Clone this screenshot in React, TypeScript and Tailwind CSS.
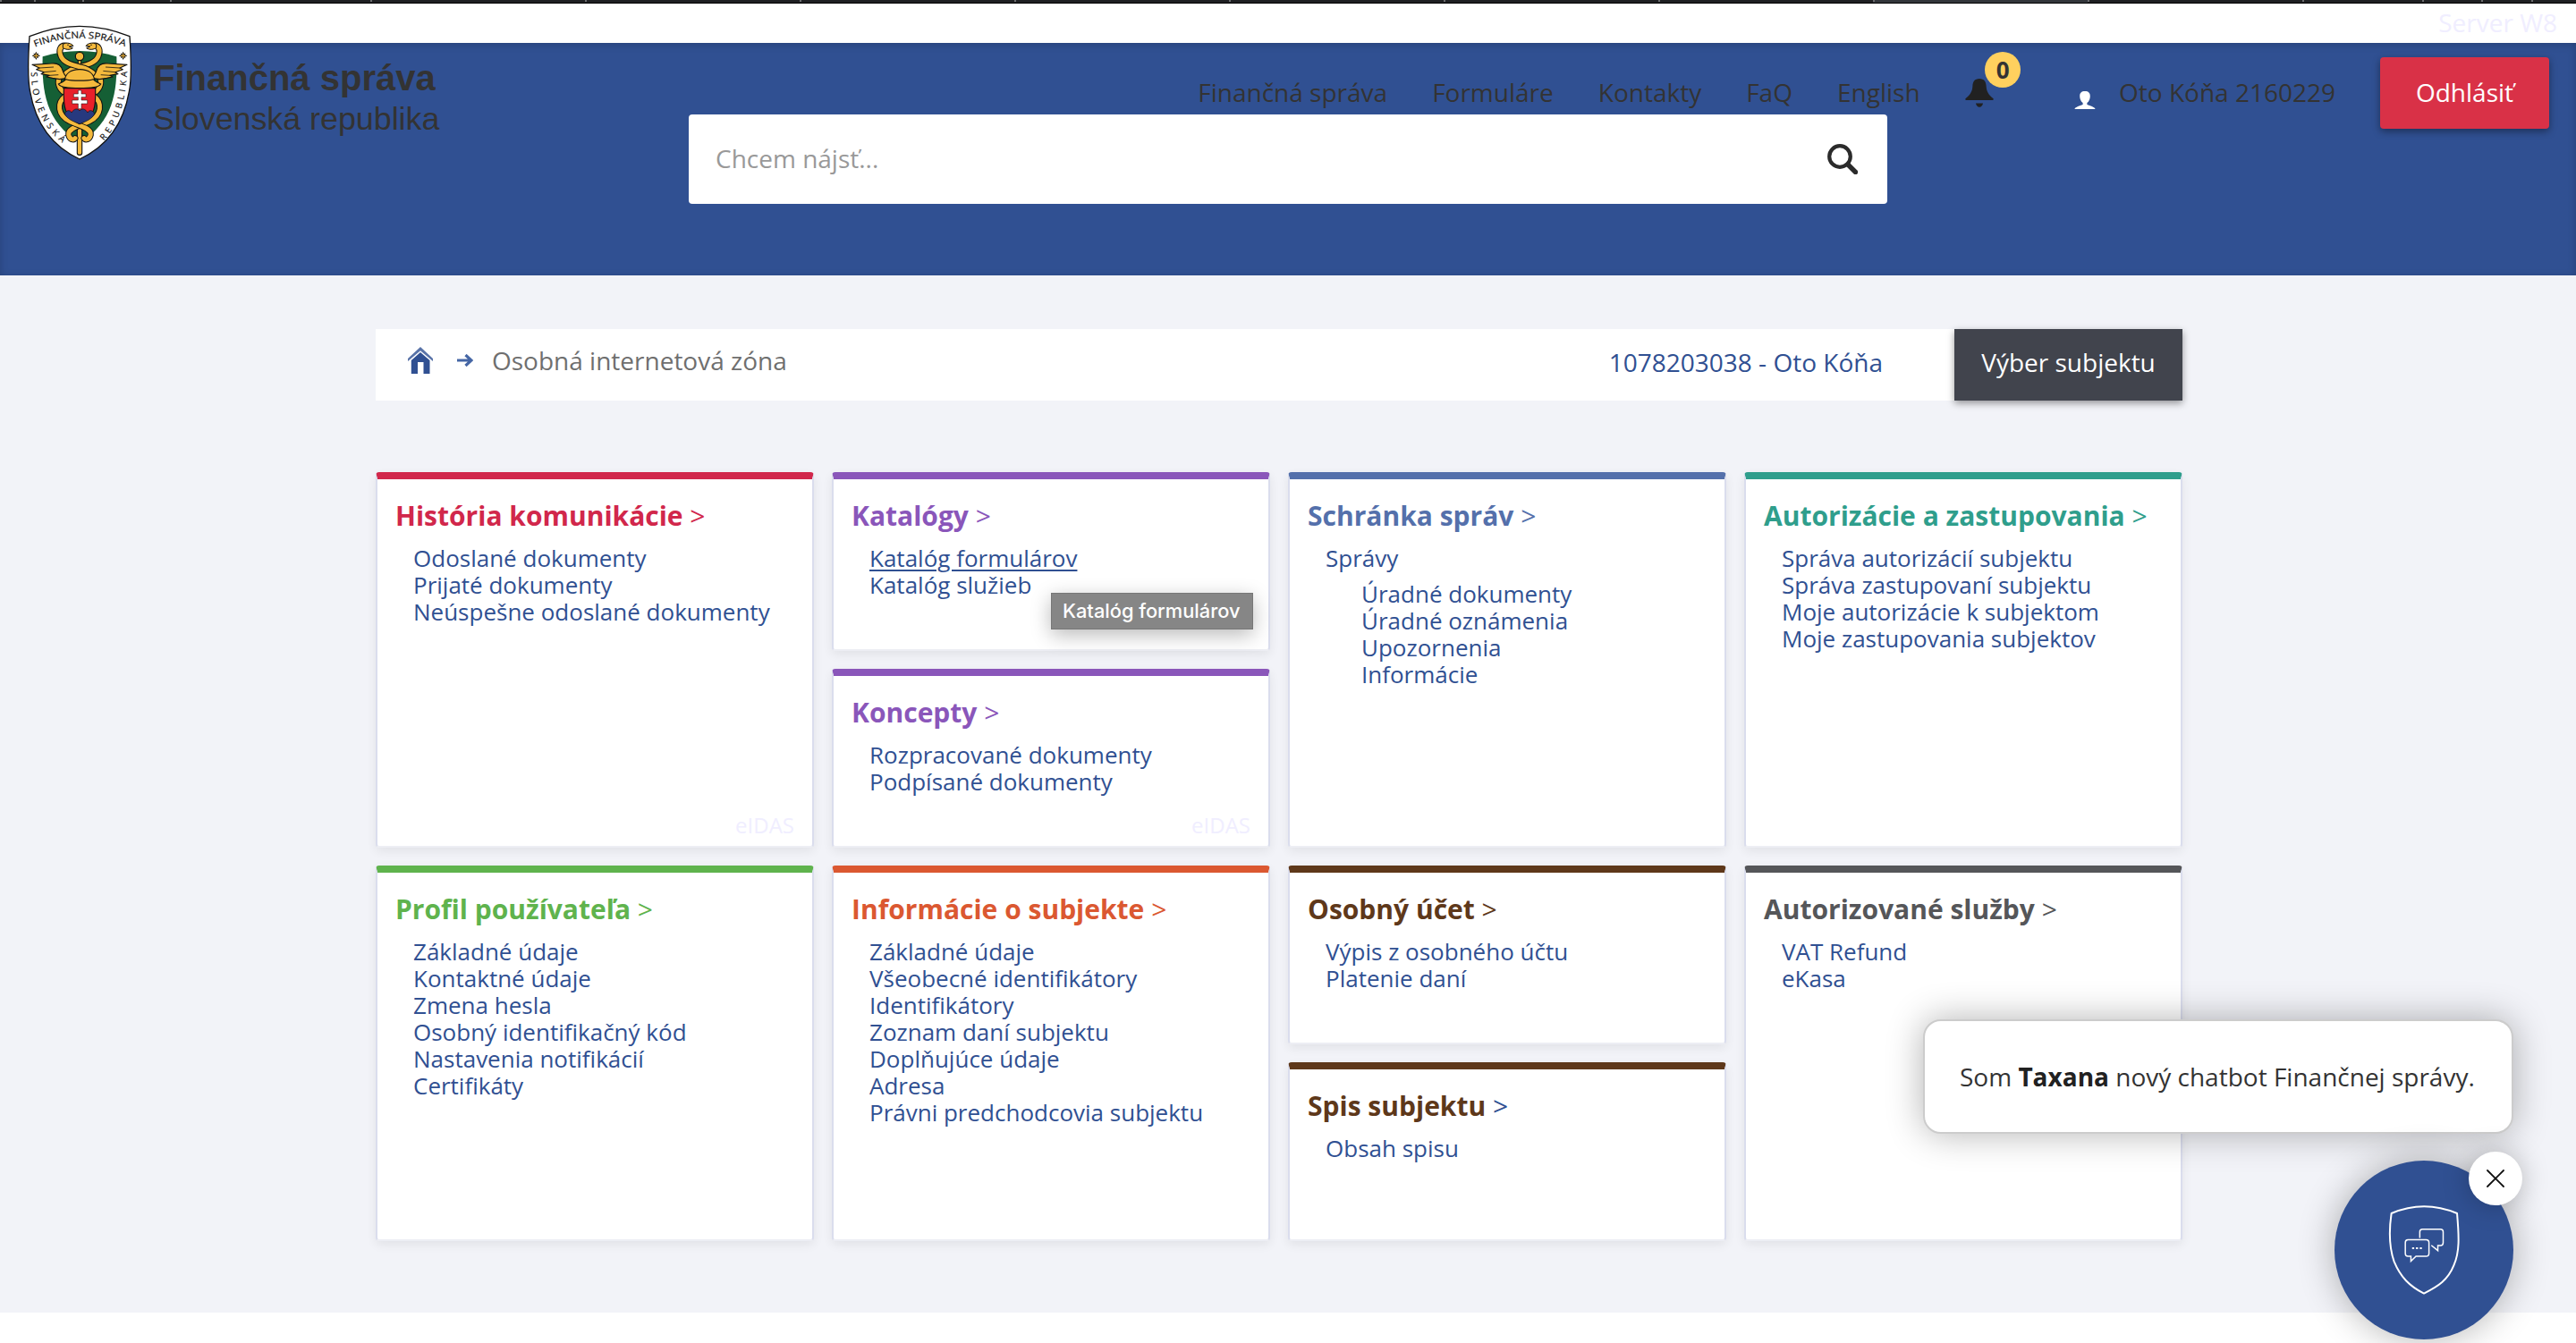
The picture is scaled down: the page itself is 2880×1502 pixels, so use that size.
import React from "react";

type LinkItem = { label: string; underlined?: boolean; children?: string[] };
type CardData = {
  title: string;
  color: string;
  chevron?: string;
  links: LinkItem[];
  eidas?: boolean;
};

const plain = (...labels: string[]): LinkItem[] => labels.map((label) => ({ label }));

const rows: CardData[][][] = [
  [
    [
      {
        title: "História komunikácie",
        color: "border-t-[#d1274b] text-[#d1274b]",
        links: plain("Odoslané dokumenty", "Prijaté dokumenty", "Neúspešne odoslané dokumenty"),
        eidas: true,
      },
    ],
    [
      {
        title: "Katalógy",
        color: "border-t-[#8a56ba] text-[#8a56ba]",
        links: [{ label: "Katalóg formulárov", underlined: true }, { label: "Katalóg služieb" }],
      },
      {
        title: "Koncepty",
        color: "border-t-[#8a56ba] text-[#8a56ba]",
        links: plain("Rozpracované dokumenty", "Podpísané dokumenty"),
        eidas: true,
      },
    ],
    [
      {
        title: "Schránka správ",
        color: "border-t-[#5470ab] text-[#5470ab]",
        links: [
          {
            label: "Správy",
            children: ["Úradné dokumenty", "Úradné oznámenia", "Upozornenia", "Informácie"],
          },
        ],
      },
    ],
    [
      {
        title: "Autorizácie a zastupovania",
        color: "border-t-[#2f9e8c] text-[#2f9e8c]",
        links: plain(
          "Správa autorizácií subjektu",
          "Správa zastupovaní subjektu",
          "Moje autorizácie k subjektom",
          "Moje zastupovania subjektov",
        ),
      },
    ],
  ],
  [
    [
      {
        title: "Profil používateľa",
        color: "border-t-[#5fb34d] text-[#5fb34d]",
        links: plain(
          "Základné údaje",
          "Kontaktné údaje",
          "Zmena hesla",
          "Osobný identifikačný kód",
          "Nastavenia notifikácií",
          "Certifikáty",
        ),
      },
    ],
    [
      {
        title: "Informácie o subjekte",
        color: "border-t-[#db5831] text-[#db5831]",
        links: plain(
          "Základné údaje",
          "Všeobecné identifikátory",
          "Identifikátory",
          "Zoznam daní subjektu",
          "Doplňujúce údaje",
          "Adresa",
          "Právni predchodcovia subjektu",
        ),
      },
    ],
    [
      {
        title: "Osobný účet",
        color: "border-t-[#5e381a] text-[#5e381a]",
        links: plain("Výpis z osobného účtu", "Platenie daní"),
      },
      {
        title: "Spis subjektu",
        color: "border-t-[#5e381a] text-[#5e381a]",
        chevron: "text-[#305092]",
        links: plain("Obsah spisu"),
      },
    ],
    [
      {
        title: "Autorizované služby",
        color: "border-t-[#555659] text-[#555659]",
        links: plain("VAT Refund", "eKasa"),
      },
    ],
  ],
];

const tabs = [
  "w-[38px]",
  "w-[54px]",
  "w-[98px]",
  "w-[224px]",
  "w-[240px]",
  "w-[240px]",
  "w-[240px]",
  "w-[240px]",
  "w-[240px]",
  "w-[240px]",
  "w-[240px]",
  "w-[240px] bg-[#33363b]",
  "w-[240px]",
  "w-[134px]",
  "w-[66px]",
  "w-[56px]",
];

function TabStrip() {
  return (
    <div className="flex h-1 overflow-hidden border-b border-black bg-[#1f2023]">
      {tabs.map((w, i) => (
        <span key={i} className={`${w} shrink-0`}>
          <span className="block h-[2px] w-[2px] bg-[#6b6c6f]" />
        </span>
      ))}
      <span className="h-[2px] w-[2px] bg-[#6b6c6f]" />
    </div>
  );
}

function SnakeHalf() {
  const upper = "M166 95 C142 88 136 108 144 128 C152 150 180 157 210 165 C232 170 246 178 262 194";
  const mid = "M142 196 C130 214 136 238 158 252";
  const loop = "M160 262 C128 286 134 326 172 346 C200 362 248 368 244 392 C240 410 226 410 222 404";
  return (
    <g fill="none" strokeLinecap="round">
      {[upper, mid, loop].map((d) => (
        <g key={d}>
          <path d={d} stroke="#111" strokeWidth="21" />
          <path d={d} stroke="#f4b93c" strokeWidth="15" />
        </g>
      ))}
      <path
        d="M152 88 C164 80 180 86 186 94 L172 96 L184 101 C174 109 158 106 152 101Z"
        fill="#f4b93c"
        stroke="#111"
        strokeWidth="3"
      />
      <circle cx="168" cy="91" r="2.2" fill="#111" />
    </g>
  );
}

function Wing() {
  return (
    <g stroke="#111" strokeWidth="3.4" strokeLinejoin="round" fill="#f4b93c">
      <path d="M48 157 L112 153 C134 150 146 162 150 176 C154 190 160 196 168 202 L140 206 L116 202 L96 198 L106 193 L78 188 L88 182 L62 173 L72 168 Z" />
      <path d="M72 168 L120 165 M88 182 L128 178 M106 193 L136 191" strokeWidth="2.4" />
    </g>
  );
}

function Rosette({ x }: { x: number }) {
  return (
    <g transform={`translate(${x} 127)`}>
      <path
        d="M0 -14 L4 -6 L9 -9 L6 -4 L14 0 L6 4 L9 9 L4 6 L0 14 L-4 6 L-9 9 L-6 4 L-14 0 L-6 -4 L-9 -9 L-4 -6Z"
        fill="#1a1a1a"
      />
      <path d="M0 -8 V8 M-8 0 H8" stroke="#d9a133" strokeWidth="3.4" />
    </g>
  );
}

function Emblem() {
  return (
    <svg viewBox="30 24 354 456" className="h-[152px] w-[118px] shrink-0">
      <path
        d="M39 62 Q207 -6 375 62 C381 150 382 205 373 248 C356 345 306 428 207 474 C108 428 58 345 41 248 C32 205 33 150 39 62Z"
        fill="#fff"
        stroke="#111"
        strokeWidth="4"
      />
      <path d="M83 130 Q207 92 331 130 C334 250 320 350 207 418 C94 350 80 250 83 130Z" fill="#155f35" />
      <defs>
        <path id="arcTop" d="M58 98 Q207 38 366 99" />
        <path id="arcLeft" d="M44 182 C46 290 86 372 156 424" />
        <path id="arcRight" d="M288 412 C334 366 360 290 367 174" />
      </defs>
      <g fontFamily="'Open Sans', sans-serif" fontSize="31" fill="#111" stroke="#111" strokeWidth="0.5">
        <text>
          <textPath href="#arcTop" textLength="308" lengthAdjust="spacingAndGlyphs">
            FINANČNÁ SPRÁVA
          </textPath>
        </text>
        <text fontSize="29">
          <textPath href="#arcLeft" textLength="268">
            SLOVENSKÁ
          </textPath>
        </text>
        <text fontSize="29">
          <textPath href="#arcRight" textLength="250">
            REPUBLIKA
          </textPath>
        </text>
      </g>
      <Rosette x={61} />
      <Rosette x={353} />
      <rect x="199" y="340" width="16" height="120" rx="7" fill="#f4b93c" stroke="#111" strokeWidth="3.4" />
      <rect x="202" y="136" width="10" height="34" fill="#f4b93c" stroke="#111" strokeWidth="3" />
      <g transform="translate(414 0) scale(-1 1)">
        <SnakeHalf />
      </g>
      <SnakeHalf />
      <circle cx="207" cy="129" r="14" fill="#f4b93c" stroke="#111" strokeWidth="3.4" />
      <Wing />
      <g transform="translate(414 0) scale(-1 1)">
        <Wing />
      </g>
      <path
        d="M156 218 C156 186 178 173 207 173 C236 173 258 186 258 218Z"
        fill="#f4b93c"
        stroke="#111"
        strokeWidth="3.4"
      />
      <path
        d="M136 222 C150 216 156 212 162 206 C180 212 234 212 252 206 C258 212 264 216 278 222 C272 232 252 236 207 236 C162 236 142 232 136 222Z"
        fill="#f4b93c"
        stroke="#111"
        strokeWidth="3.4"
      />
      <path
        d="M154 236 H260 C262 300 258 332 207 356 C156 332 152 300 154 236Z"
        fill="#e8202a"
        stroke="#111"
        strokeWidth="3.4"
      />
      <path
        d="M157 322 C162 308 176 308 180 318 C188 304 200 302 207 312 C214 302 226 304 234 318 C238 308 252 308 257 322 C250 338 232 346 207 356 C182 346 164 338 157 322Z"
        fill="#27397f"
        stroke="#111"
        strokeWidth="2"
      />
      <path
        d="M202 243 H213 V255 H228 V266 H213 V276 H233 V288 H213 V305 H202 V288 H182 V276 H202 V266 H187 V255 H202Z"
        fill="#fff"
        stroke="#111"
        strokeWidth="1.6"
      />
    </svg>
  );
}

function BellIcon() {
  return (
    <svg viewBox="0 0 32 32" className="h-8 w-8" fill="#212121">
      <path d="M16 0C10.6 0 8.6 3.6 8.4 8C8.1 14.5 5.6 18.2 0.4 22.2C0.2 23.6 0.6 24 1.4 24H30.6C31.4 24 31.8 23.6 31.6 22.2C26.4 18.2 23.9 14.5 23.6 8C23.4 3.6 21.4 0 16 0Z" />
      <path d="M12 27.6H20C19.6 30.2 18 31.8 16 31.8C14 31.8 12.4 30.2 12 27.6Z" />
    </svg>
  );
}

function UserIcon() {
  return (
    <svg viewBox="0 0 24 20" className="h-5 w-6" fill="#fff">
      <path d="M12 0C8 0 6.2 2 6.2 5.4C6.2 8.4 7.4 11.4 9.6 13V15C6 16.4 1.6 17.4 0.4 20H23.6C22.4 17.4 18 16.4 14.4 15V13C16.6 11.4 17.8 8.4 17.8 5.4C17.8 2 16 0 12 0Z" />
    </svg>
  );
}

function Header() {
  return (
    <header className="h-[260px] bg-[#305092] shadow-[inset_0_2px_10px_rgba(0,0,0,0.18)]">
      <div className="flex h-28 items-center pr-[30px] pl-[30px]">
        <div className="-mt-5 flex self-start">
          <Emblem />
          <div className="mt-9 ml-[23px] font-['Liberation_Sans',Arial,sans-serif] whitespace-nowrap text-[#333]">
            <div className="text-[40px] leading-[46px] font-bold">Finančná správa</div>
            <div className="text-[35.8px] leading-[46px]">Slovenská republika</div>
          </div>
        </div>
        <nav className="ml-auto flex items-center text-[28px] whitespace-nowrap text-[#333]">
          <a className="mr-[50px] pb-[3px]">Finančná správa</a>
          <a className="mr-[50px] pb-[3px]">Formuláre</a>
          <a className="mr-[50px] pb-[3px]">Kontakty</a>
          <a className="mr-[50px] pb-[3px]">FaQ</a>
          <a className="mr-[50.5px] pb-[3px]">English</a>
          <span className="relative mr-[90px]">
            <BellIcon />
            <span className="absolute -top-[30px] left-[22px] flex h-10 w-10 items-center justify-center rounded-full bg-[#ffd05e] text-[26px] font-bold text-[#333]">
              0
            </span>
          </span>
          <span className="mt-4 mr-[26px]">
            <UserIcon />
          </span>
          <a className="mr-[50px] pb-[3px]">Oto Kóňa 2160229</a>
          <button className="h-20 w-[189px] rounded bg-[#d93147] pb-[3px] text-white shadow-[0_3px_8px_rgba(0,0,0,0.4)]">
            Odhlásiť
          </button>
        </nav>
      </div>
      <div className="mx-auto -mt-8 flex h-[100px] w-[1340px] items-center justify-between rounded bg-white pr-[33px] pl-[30px] text-[28px] text-[#999]">
        <span className="pb-[3px]">Chcem nájsť...</span>
        <svg viewBox="0 0 34 34" className="h-[34px] w-[34px]" fill="none" stroke="#2b2b2b">
          <circle cx="14" cy="14" r="11.8" strokeWidth="4.2" />
          <path d="M23 23 L31.5 31.5" strokeWidth="5.4" strokeLinecap="round" />
        </svg>
      </div>
    </header>
  );
}

function Breadcrumb() {
  return (
    <div className="flex h-20 items-stretch bg-white text-[28px] leading-10 whitespace-nowrap">
      <div className="mt-[15px] flex h-10 items-center">
        <svg viewBox="0 0 28 30" className="ml-9 h-[30px] w-7" fill="#305092">
          <path d="M14 0 L28 13 V16 L14 4.2 L0 16 V13Z" opacity="0.8" />
          <path d="M14 6 L24.5 15 V30 H17.5 V17 H11 V30 H3.8 V15Z" />
        </svg>
        <svg viewBox="0 0 18 14" className="ml-[27px] h-3.5 w-[18px]" fill="none" stroke="#4566a5" strokeWidth="3.2">
          <path d="M0 7 H15 M9.5 1 L16 7 L9.5 13" />
        </svg>
        <span className="ml-[21px] text-[#6f6f6f]">Osobná internetová zóna</span>
      </div>
      <span className="mt-[17px] mr-20 ml-auto text-[#305092]">1078203038 - Oto Kóňa</span>
      <button className="w-[255px] bg-[#41444d] pb-1.5 text-white shadow-[0_3px_8px_rgba(0,0,0,0.4)]">
        Výber subjektu
      </button>
    </div>
  );
}

function Card({ card }: { card: CardData }) {
  return (
    <section
      className={`flex flex-1 flex-col rounded border-2 border-t-8 border-x-[#dadded] border-b-[#edeef4] bg-white pt-[21px] pb-[11px] shadow-[0_4px_12px_rgba(0,0,0,0.07)] ${card.color}`}
    >
      <h2 className="pl-5 text-[30px] leading-10 whitespace-nowrap">
        <b>{card.title} </b>
        <span className={card.chevron}>&gt;</span>
      </h2>
      <ul className="mt-3 pl-10 text-[26px] leading-[30px] whitespace-nowrap text-[#305092]">
        {card.links.map((l) => (
          <li key={l.label}>
            <a className={l.underlined ? "underline decoration-2 underline-offset-[3px]" : ""}>{l.label}</a>
            {l.children && (
              <ul className="mt-2.5 pl-10">
                {l.children.map((c) => (
                  <li key={c}>{c}</li>
                ))}
              </ul>
            )}
          </li>
        ))}
      </ul>
      {card.eidas && <span className="mt-auto mr-5 self-end text-2xl leading-6 text-[#f0eeff]">eIDAS</span>}
    </section>
  );
}

function ChatWidget() {
  return (
    <>
      <div className="absolute top-[1140px] left-[2150px] flex h-32 w-[660px] items-center rounded-[20px] border-2 border-[#ccc] bg-white pl-[39px] text-[28px] whitespace-pre text-[#333] shadow-[0_0_40px_rgba(0,0,0,0.3)]">
        <span>
          Som <b className="text-[#212121]">Taxana</b> nový chatbot Finančnej správy.
        </span>
      </div>
      <div className="absolute top-[1298px] left-[2610px] flex h-[200px] w-[200px] items-center justify-center rounded-full bg-[#305092] shadow-[0_0_40px_rgba(0,0,0,0.3)]">
        <svg viewBox="240 263 242 300" className="h-[100px] w-20" fill="none" stroke="#fff">
          <path
            d="M251 289 Q361 242 473 289 C480 370 482 420 462 465 C442 515 410 535 361 560 C312 535 282 505 260 452 C242 400 242 350 251 289Z"
            strokeWidth="6"
            strokeLinejoin="round"
          />
          <path
            d="M347 372 V352 Q347 343 356 343 H417 Q426 343 426 352 V388 Q426 398 417 398 H408 V415 L386 397"
            strokeWidth="4.5"
          />
          <path
            d="M307 378 H368 Q378 378 378 388 V424 Q378 434 368 434 H334 L317 451 V434 H307 Q298 434 298 424 V388 Q298 378 307 378Z"
            strokeWidth="4.5"
          />
          <path d="M321 407 H328 M334 407 H341 M347 407 H354" strokeWidth="6" />
        </svg>
      </div>
      <button className="absolute top-[1288px] left-[2760px] flex h-[60px] w-[60px] items-center justify-center rounded-full bg-white shadow-[0_0_30px_rgba(0,0,0,0.25)]">
        <svg viewBox="0 0 20 20" className="h-5 w-5" fill="none" stroke="#111" strokeWidth="1.8" strokeLinecap="round">
          <path d="M1 1 L19 19 M19 1 L1 19" />
        </svg>
      </button>
    </>
  );
}

export default function App() {
  return (
    <div className="relative h-[1502px] w-[2880px] overflow-hidden bg-white font-['Open_Sans',sans-serif]">
      <TabStrip />
      <div className="h-11 pt-px pr-[21px] text-right text-[28px] leading-10 text-[#f0eeff]">Server W8</div>
      <Header />
      <main className="h-[1160px] bg-[#f2f3f8] pt-[60px]">
        <div className="mx-auto w-[2020px] -translate-x-2.5">
          <Breadcrumb />
          <div className="mt-20 flex flex-col gap-5">
            {rows.map((row, r) => (
              <div key={r} className="grid h-[420px] grid-cols-4 gap-5">
                {row.map((stack, c) => (
                  <div key={c} className="flex flex-col gap-5">
                    {stack.map((card) => (
                      <Card key={card.title} card={card} />
                    ))}
                  </div>
                ))}
              </div>
            ))}
          </div>
        </div>
      </main>
      <div className="absolute top-[663px] left-[1175px] flex h-[41px] w-[226px] items-center border border-[#777] bg-[#868686] pb-px pl-3 font-[Inter,sans-serif] text-[21.8px] font-medium whitespace-nowrap text-white shadow-[0_6px_22px_rgba(0,0,0,0.28)]">
        Katalóg formulárov
      </div>
      <ChatWidget />
    </div>
  );
}
